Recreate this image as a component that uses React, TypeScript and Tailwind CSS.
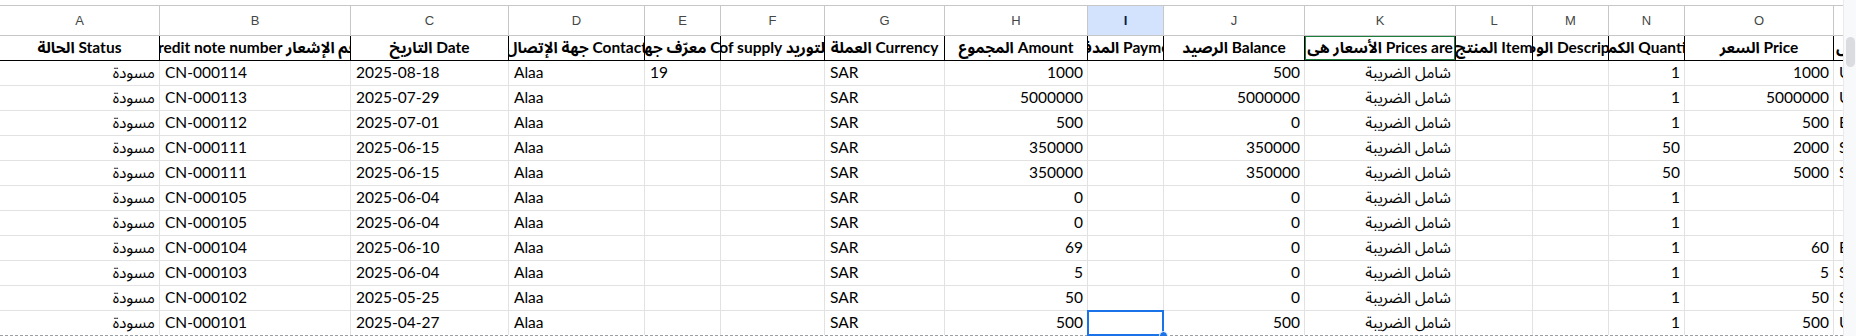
import React from "react";

type Col = {
  k: string;
  w: string;
  h: string;
  a: "l" | "r";
};

const cols: Col[] = [
  { k: "A", w: "w-[160px]", h: "الحالة Status", a: "r" },
  { k: "B", w: "w-[191px]", h: "Credit note number رقم الإشعار", a: "l" },
  { k: "C", w: "w-[158px]", h: "التاريخ Date", a: "l" },
  { k: "D", w: "w-[136px]", h: "جهة الإتصال Contact", a: "l" },
  { k: "E", w: "w-[76px]", h: "معرّف جهة الإتصال Contact ID", a: "l" },
  { k: "F", w: "w-[104px]", h: "Place of supply مكان التوريد", a: "l" },
  { k: "G", w: "w-[120px]", h: "العملة Currency", a: "l" },
  { k: "H", w: "w-[143px]", h: "المجموع Amount", a: "r" },
  { k: "I", w: "w-[76px]", h: "المدفوع Payment", a: "r" },
  { k: "J", w: "w-[141px]", h: "الرصيد Balance", a: "r" },
  { k: "K", w: "w-[151px]", h: "الأسعار هي Prices are", a: "r" },
  { k: "L", w: "w-[77px]", h: "المنتج Item", a: "l" },
  { k: "M", w: "w-[76px]", h: "الوصف Description", a: "l" },
  { k: "N", w: "w-[76px]", h: "الكمية Quantity", a: "r" },
  { k: "O", w: "w-[149px]", h: "السعر Price", a: "r" },
  { k: "P", w: "w-[40px]", h: "س", a: "l" },
];

const T = "شامل الضريبة";
const S = "مسودة";

const rows: string[][] = [
  [S, "CN-000114", "2025-08-18", "Alaa", "19", "", "SAR", "1000", "", "500", T, "", "", "1", "1000", "Unit"],
  [S, "CN-000113", "2025-07-29", "Alaa", "", "", "SAR", "5000000", "", "5000000", T, "", "", "1", "5000000", "Unit"],
  [S, "CN-000112", "2025-07-01", "Alaa", "", "", "SAR", "500", "", "0", T, "", "", "1", "500", "Each"],
  [S, "CN-000111", "2025-06-15", "Alaa", "", "", "SAR", "350000", "", "350000", T, "", "", "50", "2000", "Set"],
  [S, "CN-000111", "2025-06-15", "Alaa", "", "", "SAR", "350000", "", "350000", T, "", "", "50", "5000", "Set"],
  [S, "CN-000105", "2025-06-04", "Alaa", "", "", "SAR", "0", "", "0", T, "", "", "1", "", ""],
  [S, "CN-000105", "2025-06-04", "Alaa", "", "", "SAR", "0", "", "0", T, "", "", "1", "", ""],
  [S, "CN-000104", "2025-06-10", "Alaa", "", "", "SAR", "69", "", "0", T, "", "", "1", "60", "Each"],
  [S, "CN-000103", "2025-06-04", "Alaa", "", "", "SAR", "5", "", "0", T, "", "", "1", "5", "Set"],
  [S, "CN-000102", "2025-05-25", "Alaa", "", "", "SAR", "50", "", "0", T, "", "", "1", "50", "Set"],
  [S, "CN-000101", "2025-04-27", "Alaa", "", "", "SAR", "500", "", "500", T, "", "", "1", "500", "Unit"],
];

const FONT = "font-['Lato','Noto_Sans_Arabic','DejaVu_Sans',sans-serif]";

export default function App() {
  return (
    <div className="flex w-[1856px] h-[336px] overflow-hidden bg-white">
      <div className={`w-[1843px] shrink-0 overflow-hidden flex flex-col ${FONT} text-black`}>
        <div className="h-[5px] shrink-0" />
        {/* column letters */}
        <div className="flex h-[31px] shrink-0 border-y border-[#c7c7c7]">
          {cols.map((c) => (
            <div
              key={c.k}
              className={`${c.w} shrink-0 h-full flex items-center justify-center border-r border-[#c7c7c7] font-['Liberation_Sans',sans-serif] text-[13px] ${
                c.k === "I" ? "bg-[#d3e3fd] text-[#041e49] font-bold" : "text-[#444746]"
              }`}
            >
              {c.k === "P" ? "" : c.k}
            </div>
          ))}
        </div>
        {/* header row */}
        <div className="flex h-[25px] shrink-0 border-b border-black">
          {cols.map((c) => (
            <div
              key={c.k}
              className={`${c.w} shrink-0 h-full relative flex items-center ${
                c.k === "P" ? "justify-start pl-[2px]" : "justify-center"
              } overflow-hidden border-r border-black`}
            >
              <span className="whitespace-nowrap font-bold text-[15.5px] leading-none">{c.h}</span>
              {c.k === "K" && (
                <div className="absolute -left-px -top-px -right-px -bottom-px border-2 border-[#1e7e3e]" />
              )}
            </div>
          ))}
        </div>
        {/* data rows */}
        {rows.map((r, ri) => {
          const last = ri === rows.length - 1;
          return (
            <div
              key={ri}
              className={`flex h-[25px] shrink-0 border-b ${
                last ? "border-dashed border-[#9aa0a6]" : "border-[#e2e2e2]"
              }`}
            >
              {cols.map((c, ci) => {
                const sel = last && c.k === "I";
                return (
                  <div
                    key={c.k}
                    className={`${c.w} shrink-0 h-full relative flex items-center ${
                      c.a === "r" ? "justify-end pr-[4px]" : "justify-start pl-[5px]"
                    } ${c.k === "P" ? "pl-[2px]" : ""} border-r border-solid border-[#e2e2e2] ${
                      sel ? "z-10" : "overflow-hidden"
                    }`}
                  >
                    <span className="whitespace-nowrap text-[15.5px] leading-none">{r[ci]}</span>
                    {sel && (
                      <>
                        <div className="absolute -left-px -top-px -right-px -bottom-px border-2 border-[#1a73e8]" />
                        <div className="absolute right-[-5px] bottom-[-5px] w-[9px] h-[9px] rounded-full bg-[#1a73e8] border border-white z-10" />
                      </>
                    )}
                  </div>
                );
              })}
            </div>
          );
        })}
      </div>
      {/* vertical scrollbar */}
      <div className="w-[13px] shrink-0 h-full bg-[#f8f9fa] border-l border-[#e8eaed] flex flex-col items-center pt-[37px]">
        <div className="w-[9px] h-[30px] rounded-full bg-[#dadce0]" />
      </div>
    </div>
  );
}
